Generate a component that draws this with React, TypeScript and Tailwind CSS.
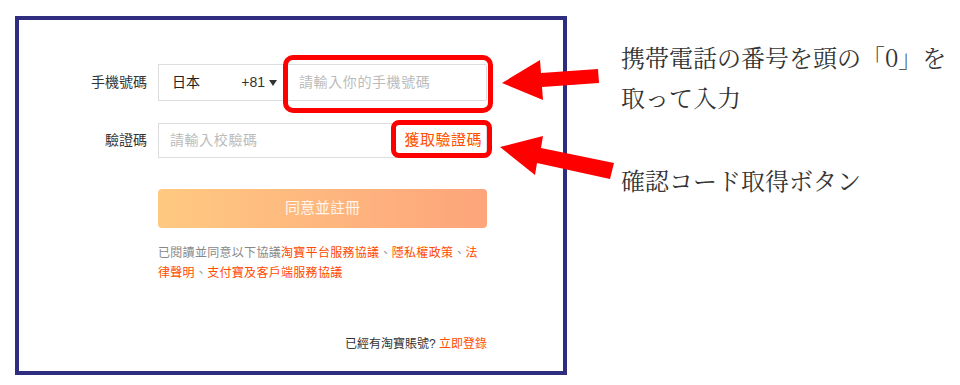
export default function App() {
  const cjk = "font-['Liberation_Sans','Noto_Sans_CJK_TC',sans-serif]";

  return (
    <div className="relative w-[960px] h-[385px] bg-white overflow-hidden flex items-start">
      {/* 註冊表單 */}
      <div className={`ml-[15px] mt-[16px] w-[552px] h-[359px] border-4 border-[#2f2d80] pl-[48px] pt-[44px] flex flex-col ${cjk}`}>
        <div className="flex items-center">
          <span className="w-[80px] mr-[11px] text-right text-[14px] text-[#333]">手機號碼</span>
          <div className="w-[329px] h-[37px] flex">
            <div className="w-[129px] h-full border border-r-0 border-[#ddd] flex items-center justify-between pl-[13px] pr-[10px]">
              <span className="text-[14px] text-[#222]">日本</span>
              <span className="flex items-center gap-[4px] text-[14px] text-[#333]">
                +81
                <span className="w-0 h-0 border-l-[4px] border-r-[4px] border-t-[6px] border-l-transparent border-r-transparent border-t-[#333]" />
              </span>
            </div>
            <div className="flex-1 h-full border border-[#ddd] rounded-[2px] flex items-center pl-[11px]">
              <span className="text-[14px] text-[#bbb] tracking-[0.6px]">請輸入你的手機號碼</span>
            </div>
          </div>
        </div>

        <div className="flex items-center mt-[22px]">
          <span className="w-[80px] mr-[11px] text-right text-[14px] text-[#333]">驗證碼</span>
          <div className="w-[329px] h-[35px] border border-[#ddd] flex items-center justify-between pl-[11px] pr-[4px]">
            <span className="text-[14px] text-[#bbb] tracking-[0.6px]">請輸入校驗碼</span>
            <span className="text-[15px] text-[#ff5000] tracking-[0.5px]">獲取驗證碼</span>
          </div>
        </div>

        <button className="ml-[91px] mt-[31px] w-[329px] h-[39px] rounded-[4px] bg-gradient-to-r from-[#fec981] to-[#fda47b] text-[15px] text-white/85">
          同意並註冊
        </button>

        <p className="ml-[91px] mt-[15px] w-[329px] text-[12px] leading-[20px] text-[#888] tracking-[0.3px]">
          已閱讀並同意以下協議<span className="text-[#ff4a00]">淘寶平台服務協議</span>、<span className="text-[#ff4a00]">隱私權政策</span>、<span className="text-[#ff4a00]">法</span>
          <br />
          <span className="text-[#ff4a00]">律聲明</span>、<span className="text-[#ff4a00]">支付寶及客戶端服務協議</span>
        </p>

        <p className="ml-[91px] mt-[51px] w-[329px] text-right text-[12px] leading-[20px] text-[#333]">
          已經有淘寶賬號? <span className="text-[#ff5000]">立即登錄</span>
        </p>
      </div>

      {/* 説明文 */}
      <div className="ml-[54px] mt-[37px] text-[24px] leading-[40px] text-[#333] font-['Noto_Serif_CJK_JP','Noto_Sans_CJK_JP',serif]">
        <p>
          携帯電話の番号を頭の「0」を
          <br />
          取って入力
        </p>
        <p className="mt-[43px]">確認コード取得ボタン</p>
      </div>

      {/* 赤枠 */}
      <div className="absolute left-[283px] top-[55px] w-[210px] h-[58px] border-[5px] border-[#f00] rounded-[10px]" />
      <div className="absolute left-[391px] top-[120px] w-[101px] h-[38px] border-[5px] border-[#f00] rounded-[8px]" />

      {/* 矢印 */}
      <svg className="absolute left-0 top-0 pointer-events-none" width="960" height="385" viewBox="0 0 960 385">
        <polygon
          fill="#f00"
          points="502,83 540,60 541,73 598,69 599,83 542,87 543,100"
        />
        <polygon
          fill="#f00"
          points="500,147 543,136 541,148 614,163 610,179 537,163 535,175"
        />
      </svg>
    </div>
  );
}
